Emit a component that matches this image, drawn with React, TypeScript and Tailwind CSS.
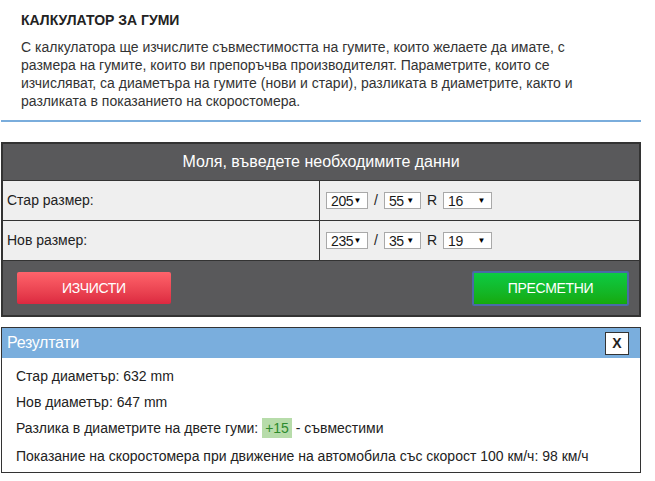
import React from 'react';

function FakeSelect({ value, width }: { value: string; width: string }) {
  return (
    <div
      className={`flex h-[17px] items-center justify-between border border-[#a9a9a9] bg-white pl-[4px] pr-[6px] text-[14px] leading-none tracking-[-0.4px] text-[#1a1a1a] ${width}`}
    >
      <span>{value}</span>
      <span className="text-[8px] text-black">▼</span>
    </div>
  );
}

function SizeRow({ label, a, b, c }: { label: string; a: string; b: string; c: string }) {
  return (
    <div className="flex h-[40px] border-b border-[#333] bg-[#efefef]">
      <div className="flex w-[317px] items-center border-r border-[#333] pl-[4px] text-[14px] text-[#222]">{label}</div>
      <div className="flex flex-1 items-center gap-[6px] pl-[6px] text-[14px] text-[#222]">
        <FakeSelect value={a} width="w-[42px]" />
        <span>/</span>
        <FakeSelect value={b} width="w-[37px]" />
        <span>R</span>
        <FakeSelect value={c} width="w-[49px]" />
      </div>
    </div>
  );
}

export default function App() {
  const rows = [
    { label: 'Стар размер:', a: '205', b: '55', c: '16' },
    { label: 'Нов размер:', a: '235', b: '35', c: '19' },
  ];

  return (
    <div className="min-h-screen bg-white font-['Liberation_Sans',Arial,sans-serif] text-[#222]">
      <div className="px-[21px] pt-[12px]">
        <h1 className="text-[14px] font-bold leading-[16px] text-[#222]">КАЛКУЛАТОР ЗА ГУМИ</h1>
        <p className="mt-[10px] w-[600px] text-[14px] leading-[18px] text-[#333]">
          С калкулатора ще изчислите съвместимостта на гумите, които желаете да имате, с размера на гумите, които ви
          препоръчва производителят. Параметрите, които се изчисляват, са диаметъра на гумите (нови и стари), разликата в
          диаметрите, както и разликата в показанието на скоростомера.
        </p>
      </div>

      <div className="ml-px mt-[10px] h-[2px] w-[640px] bg-[#7aaddc]" />

      <div className="ml-px mt-[20px] w-[640px] border-2 border-[#333]">
        <div className="flex h-[37px] items-center justify-center border-b border-[#333] bg-[#59595b] text-[16px] text-white">
          Моля, въведете необходимите данни
        </div>
        {rows.map((r) => (
          <SizeRow key={r.label} {...r} />
        ))}
        <div className="flex h-[54px] items-center justify-between bg-[#59595b] pl-[14px] pr-[10px]">
          <button className="h-[32px] w-[154px] rounded-[2px] bg-gradient-to-b from-[#ff636b] to-[#dc2840] text-[14px] tracking-[-0.3px] text-white">
            ИЗЧИСТИ
          </button>
          <button className="h-[35px] w-[157px] rounded-[2px] border-2 border-[#4b6aa6] bg-gradient-to-b from-[#0ccb42] to-[#16a90a] text-[14px] tracking-[-0.3px] text-white">
            ПРЕСМЕТНИ
          </button>
        </div>
      </div>

      <div className="ml-px mt-[10px] w-[640px] border border-[#333]">
        <div className="flex h-[30px] items-center justify-between bg-[#7aaedd] pl-[5px] pr-[11px]">
          <span className="text-[16px] tracking-[-0.3px] text-white">Резултати</span>
          <span className="flex h-[23px] w-[24px] items-center justify-center border border-[#333] bg-white text-[14px] font-bold text-[#222]">
            X
          </span>
        </div>
        <div className="flex flex-col px-[14px] pb-[8px] pt-[10px] text-[14px] leading-[16px] text-[#222]">
          <p>Стар диаметър: 632 mm</p>
          <p className="mt-[10px]">Нов диаметър: 647 mm</p>
          <p className="mt-[10px]">
            Разлика в диаметрите на двете гуми:{' '}
            <span className="bg-[#b7dcaa] px-[3px] py-[2px] text-[#2d8a2d]">+15</span> - съвместими
          </p>
          <p className="mt-[12px]">Показание на скоростомера при движение на автомобила със скорост 100 км/ч: 98 км/ч</p>
        </div>
      </div>
    </div>
  );
}
